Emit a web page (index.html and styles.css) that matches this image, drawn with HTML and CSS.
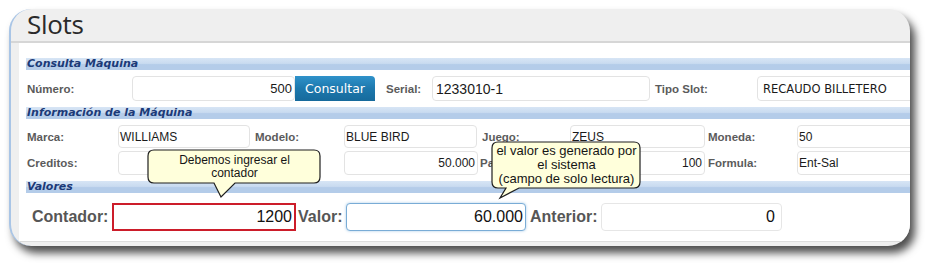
FILE: index.html
```html
<!DOCTYPE html>
<html lang="es">
<head>
<meta charset="utf-8">
<title>Slots</title>
<link rel="stylesheet" href="styles.css">
</head>
<body>
<div class="stage">
  <div class="frame">
    <div class="header">Slots</div>
    <div class="content">
      <div class="bar">Consulta Máquina</div>
      <div class="row r1">
        <span class="lbl l-num">Número:</span>
        <div class="fld right f-num">500</div>
        <div class="btn">Consultar</div>
        <span class="lbl l-serial">Serial:</span>
        <div class="fld f-serial">1233010-1</div>
        <span class="lbl l-tipo">Tipo Slot:</span>
        <div class="fld f-tipo">RECAUDO BILLETERO</div>
      </div>

      <div class="bar">Información de la Máquina</div>
      <div class="row r2">
        <span class="lbl c1">Marca:</span>
        <div class="fld c2">WILLIAMS</div>
        <span class="lbl c3">Modelo:</span>
        <div class="fld c4">BLUE BIRD</div>
        <span class="lbl c5">Juego:</span>
        <div class="fld c6">ZEUS</div>
        <span class="lbl c7">Moneda:</span>
        <div class="fld c8">50</div>
      </div>
      <div class="row r3">
        <span class="lbl c1">Creditos:</span>
        <div class="fld c2"></div>
        <span class="lbl c3"></span>
        <div class="fld right c4b">50.000</div>
        <span class="lbl c5b">Pago:</span>
        <div class="fld right c6">100</div>
        <span class="lbl c7">Formula:</span>
        <div class="fld c8">Ent-Sal</div>
      </div>

      <div class="bar">Valores</div>
      <div class="row r4">
        <span class="big l-cont">Contador:</span>
        <div class="bfld right f-cont">1200</div>
        <span class="big l-valor">Valor:</span>
        <div class="bfld right f-valor">60.000</div>
        <span class="big l-ant">Anterior:</span>
        <div class="bfld right f-ant">0</div>
      </div>
    </div>
  </div>

  <div class="callout co1">
    <svg class="bubble" width="175" height="50" viewBox="0 0 175 50">
      <path d="M7,1 H167 Q173,1 173,7 V28 Q173,34 167,34 H88 L74,48 L67,34 H7 Q1,34 1,28 V7 Q1,1 7,1 Z" fill="#ffffdb" stroke="#1e1e1e" stroke-width="1.2"/>
    </svg>
    <div class="ctext t1">Debemos ingresar el<br>contador</div>
  </div>

  <div class="callout co2">
    <svg class="bubble" width="151" height="59" viewBox="0 0 151 59">
      <path d="M7,1 H143 Q149,1 149,7 V41 Q149,47 143,47 H28 L9,57 L15,47 H7 Q1,47 1,41 V7 Q1,1 7,1 Z" fill="#ffffdb" stroke="#1e1e1e" stroke-width="1.2"/>
    </svg>
    <div class="ctext t2">el valor es generado por<br>el sistema<br>(campo de solo lectura)</div>
  </div>
</div>
</body>
</html>
```

FILE: styles.css
```css
* { box-sizing: border-box; }

html, body {
  margin: 0;
  padding: 0;
  background: #ffffff;
}

.stage {
  position: relative;
  width: 935px;
  height: 275px;
  overflow: hidden;
}

.frame {
  margin: 9px 0 0 9px;
  width: 901px;
  height: 237px;
  border-radius: 22px;
  border-left: 2px solid #a9c5e6;
  background: #efefef;
  box-shadow: 5px 7px 8px rgba(0, 0, 0, 0.7);
  overflow: hidden;
  display: flex;
  flex-direction: column;
}

.header {
  height: 34px;
  padding: 0 0 0 16px;
  font-family: "Open Sans", "Liberation Sans", sans-serif;
  font-size: 26px;
  line-height: 31px;
  letter-spacing: -0.3px;
  color: #2a2a2a;
  border-bottom: 2px solid #d6d6d6;
  flex: none;
}

.content {
  margin-left: 8px;
  background: #ffffff;
  padding: 15px 0 0 7px;
  height: 199px;
  border-bottom: 1px solid #dcdcdc;
  display: flex;
  flex-direction: column;
  flex: none;
}

.bar {
  height: 12px;
  width: 900px;
  flex: none;
  background: linear-gradient(#d7e5f5 0%, #c9dbf0 45%, #b4cce9 55%, #b4cce9 100%);
  font-family: "DejaVu Sans", Verdana, sans-serif;
  font-weight: bold;
  font-style: italic;
  font-size: 11px;
  line-height: 12px;
  color: #1b3a78;
  padding-left: 1px;
  white-space: nowrap;
}

.row {
  display: flex;
  align-items: center;
  flex: none;
  white-space: nowrap;
}

.r1 { margin-top: 6px; height: 25px; margin-bottom: 6px; }
.r2 { margin-top: 6px; height: 23px; }
.r3 { margin-top: 3px; height: 24px; margin-bottom: 6px; }
.r4 { margin-top: 10px; height: 28px; }

.lbl {
  flex: none;
  font-family: "Liberation Sans", Arial, sans-serif;
  font-weight: bold;
  font-size: 11.5px;
  color: #5b5b5b;
  overflow: hidden;
}

.fld {
  flex: none;
  height: 100%;
  border: 1px solid #e3e3e3;
  border-radius: 4px;
  background: #ffffff;
  font-family: "Liberation Sans", Arial, sans-serif;
  font-size: 12px;
  color: #1a1a1a;
  padding: 0 2px 0 1px;
  display: flex;
  align-items: center;
  overflow: hidden;
}

.right { justify-content: flex-end; }

/* row 1 */
.l-num { width: 106px; padding-left: 1px; }
.f-num { width: 163px; font-size: 13px; }
.btn {
  flex: none;
  width: 80px;
  height: 25px;
  border-radius: 0 4px 0 0;
  background: linear-gradient(#2f92ca, #1d78ad 50%, #166a9c);
  color: #ffffff;
  font-family: "DejaVu Sans", Verdana, sans-serif;
  font-size: 12.5px;
  display: flex;
  align-items: center;
  justify-content: center;
}
.l-serial { width: 57px; padding-left: 11px; }
.f-serial { width: 218px; font-size: 14px; padding-left: 3px; }
.l-tipo { width: 107px; padding-left: 5px; }
.f-tipo {
  width: 160px;
  font-family: "DejaVu Sans", Verdana, sans-serif;
  font-size: 11.5px;
  padding-left: 5px;
}

/* rows 2 and 3 */
.c1 { width: 92px; padding-left: 1px; }
.c2 { width: 132px; }
.c3 { width: 94px; padding-left: 5px; }
.c4 { width: 133px; }
.c4b { width: 134px; }
.c5 { width: 93px; padding-left: 5px; }
.c5b { width: 92px; padding-left: 2px; }
.c6 { width: 135px; }
.c7 { width: 92px; padding-left: 3px; }
.c8 { width: 120px; }

/* row 4 */
.big {
  flex: none;
  font-family: "Liberation Sans", Arial, sans-serif;
  font-weight: bold;
  font-size: 16px;
  color: #565656;
}
.bfld {
  flex: none;
  height: 100%;
  background: #ffffff;
  font-family: "Liberation Sans", Arial, sans-serif;
  font-size: 16px;
  color: #111111;
  display: flex;
  align-items: center;
  padding: 0 2px;
  overflow: hidden;
}
.l-cont { width: 86px; padding-left: 6px; }
.f-cont { width: 184px; border: 2px solid #cc1d2a; }
.l-valor { width: 50px; padding-left: 2px; }
.f-valor {
  width: 180px;
  border: 1px solid #79acd6;
  border-radius: 4px;
  box-shadow: 0 0 3px #a9cbe8;
}
.l-ant { width: 75px; padding-left: 4px; }
.f-ant {
  width: 181px;
  border: 1px solid #e6e6e6;
  border-radius: 4px;
  padding-right: 6px;
}

/* callouts */
.callout {
  position: absolute;
}
.co1 { left: 147px; top: 149px; width: 175px; height: 50px; }
.co2 { left: 491px; top: 141px; width: 151px; height: 59px; }

.bubble {
  position: absolute;
  left: 0;
  top: 0;
}

.ctext {
  position: relative;
  text-align: center;
  font-family: "Liberation Sans", Arial, sans-serif;
  color: #151515;
  white-space: nowrap;
}
.t1 { font-size: 12px; line-height: 13px; padding-top: 5px; width: 175px; }
.t2 { font-size: 13px; line-height: 14px; padding-top: 3px; width: 151px; }
```
